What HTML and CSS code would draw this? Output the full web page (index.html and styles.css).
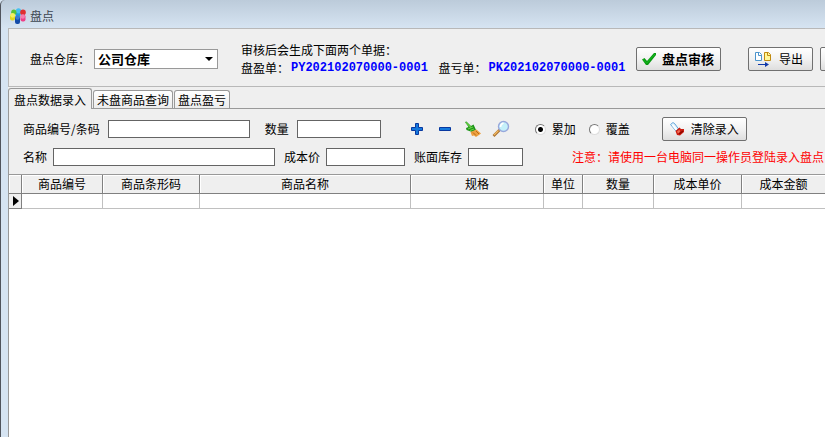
FILE: index.html
```html
<!DOCTYPE html>
<html lang="zh-CN">
<head>
<meta charset="utf-8">
<title>盘点</title>
<link rel="stylesheet" href="styles.css">
</head>
<body>
<div class="window">
  <header class="titlebar">
    <svg class="app-icon" width="16" height="16" viewBox="0 0 16 16">
      <rect x="5.500" y="3" width="5" height="6" rx="2" fill="#1c9fdc"/>
      <circle cx="8.500" cy="2.800" r="2.600" fill="#45c0f0"/>
      <circle cx="3.800" cy="4.200" r="2.600" fill="#58c238"/>
      <circle cx="13" cy="4.400" r="2.800" fill="#e03030"/>
      <rect x="10.500" y="6.500" width="5" height="7" rx="2" fill="#ee3f87"/>
      <rect x="0" y="6" width="5" height="6.500" rx="2" fill="#e0d820"/>
      <circle cx="2.700" cy="7.300" r="2.400" fill="#f4f060"/>
      <rect x="5" y="8" width="5" height="8" rx="2" fill="#124ba8"/>
      <circle cx="7.500" cy="9.500" r="2.200" fill="#3c7cd0"/>
      <circle cx="12.800" cy="8.500" r="2.200" fill="#f480b0"/>
    </svg>
    <h1 class="title">盘点</h1>
  </header>

  <main class="client">
    <section class="summary">
      <label class="warehouse-label" for="warehouse">盘点仓库：</label>
      <span class="combo">
        <select id="warehouse" class="combo-select"><option>公司仓库</option></select>
      </span>
      <div class="docs">
        <div>审核后会生成下面两个单据：</div>
        <div class="doc-line">
          <span class="doc">盘盈单：<b class="doc-no">PY202102070000-0001</b></span>
          <span class="doc">盘亏单：<b class="doc-no">PK202102070000-0001</b></span>
        </div>
      </div>
      <div class="actions">
        <button type="button" class="btn btn-audit">
          <svg width="14" height="14" viewBox="0 0 14 14"><path d="M0 7.500 2.500 6 5 9 12 1h2v2L6 13H4Z" fill="#0a9a12"/><path d="M1 7.500 4.800 11 13 2" fill="none" stroke="#16bd20" stroke-width="1"/></svg>
          盘点审核
        </button>
        <button type="button" class="btn btn-export">
          <svg width="18" height="16" viewBox="0 0 18 16"><path d="M1.500 1.500h4l2 2v6h-6Z" fill="#fff" stroke="#4c94cc"/><path d="M4.500 1.500v3h3" fill="none" stroke="#4c94cc"/><path d="M10.500 1.500h4l2 2v6h-6Z" fill="#fff79a" stroke="#c08a10"/><path d="M13.500 1.500v3h3" fill="none" stroke="#c08a10"/><path d="M4 13h7v-2l4 2.500-4 2.500V14H4Z" fill="#1038a8"/></svg>
          导出
        </button>
        <button type="button" class="btn btn-more" aria-label="更多"></button>
      </div>
    </section>

    <nav class="tabs" role="tablist">
      <button type="button" role="tab" aria-selected="true" class="tab tab-active">盘点数据录入</button>
      <button type="button" role="tab" aria-selected="false" class="tab">未盘商品查询</button>
      <button type="button" role="tab" aria-selected="false" class="tab">盘点盈亏</button>
    </nav>

    <section class="page">
      <form class="entry">
        <div class="row row-main">
          <label for="code">商品编号/条码</label>
          <input id="code" class="field field-code" type="text">
          <label for="qty">数量</label>
          <input id="qty" class="field field-qty" type="text">
          <div class="tools">
            <button type="button" class="tool" aria-label="增加">
              <svg width="18" height="18" viewBox="0 0 18 18"><path d="M7.500 3.500h3v4h4v3h-4v4h-3v-4h-4v-3h4Z" fill="#1478dc" stroke="#0838a0"/></svg>
            </button>
            <button type="button" class="tool" aria-label="减少">
              <svg width="18" height="18" viewBox="0 0 18 18"><path d="M3.500 7.500h11v3h-11Z" fill="#1478dc" stroke="#0838a0"/></svg>
            </button>
            <button type="button" class="tool" aria-label="清扫">
              <svg width="18" height="18" viewBox="0 0 18 18"><path d="M1 2 2.500 1.500 7 6 9.500 4.500 12 10 8 12 2.500 10 2 8 4.500 7Z" fill="#1c9418"/><path d="M2 2.500 7.500 8M4 9l5-2M6 10.500l4-1.500" stroke="#66cf45" stroke-width="1.200" fill="none"/><path d="M6.500 12 12.500 9.500 17 13.500 15 15 12 17 10 15.500 8 16Z" fill="#eda040"/><path d="m9 12.500 3 3m-0-4.500 3 3" stroke="#b96a16" stroke-width="1" fill="none"/></svg>
            </button>
            <button type="button" class="tool" aria-label="查找">
              <svg width="18" height="18" viewBox="0 0 18 18"><path d="m1.500 16 6-6" stroke="#a87030" stroke-width="2.600"/><path d="m2 15 4.500-4.500" stroke="#f0b860" stroke-width="1.200"/><circle cx="11.500" cy="6.500" r="5" fill="#c4f0fa" stroke="#98a8dc" stroke-width="1.400"/><path d="M8.500 7q0-3 3-4" stroke="#fff" stroke-width="1.600" fill="none"/></svg>
            </button>
          </div>
          <label class="choice"><input class="radio" type="radio" name="mode" checked>累加</label>
          <label class="choice"><input class="radio" type="radio" name="mode">覆盖</label>
          <button type="button" class="btn btn-clear">
            <svg width="16" height="16" viewBox="0 0 16 16"><path d="M1.500 3.500 4 1.500 6 3 9.500 8 7 10Z" fill="#e4f4fc" stroke="#68a8dc"/><path d="m3.500 4 4 5" stroke="#fff" stroke-width="1.500"/><path d="m6.500 10 4-3.500L12 8h3v3l-4 3.500-3-.5Z" fill="#cc1c10"/><path d="m8 10.500 2.500-2 .5 2.500-2 1.500Z" fill="#f07058"/><path d="m10 13 4-3" stroke="#8c0800" stroke-width="1.500"/></svg>
            清除录入
          </button>
        </div>
        <div class="row row-detail">
          <label for="name">名称</label>
          <input id="name" class="field field-name" type="text">
          <label for="cost">成本价</label>
          <input id="cost" class="field field-cost" type="text">
          <label for="stock">账面库存</label>
          <input id="stock" class="field field-stock" type="text">
          <span class="notice">注意：请使用一台电脑同一操作员登陆录入盘点</span>
        </div>
      </form>

      <div class="grid-area">
        <table class="grid">
          <colgroup>
            <col class="c-mark"><col class="c-code"><col class="c-barcode"><col><col class="c-spec"><col class="c-unit"><col class="c-qty"><col class="c-price"><col class="c-amount">
          </colgroup>
          <thead>
            <tr><th></th><th>商品编号</th><th>商品条形码</th><th>商品名称</th><th>规格</th><th>单位</th><th>数量</th><th>成本单价</th><th>成本金额</th></tr>
          </thead>
          <tbody>
            <tr><td class="marker"><svg width="6" height="10" viewBox="0 0 6 10"><path d="M0 0 6 5 0 10Z"/></svg></td><td></td><td></td><td></td><td></td><td></td><td></td><td></td><td></td></tr>
          </tbody>
        </table>
      </div>
    </section>
  </main>
</div>
</body>
</html>
```
FILE: styles.css
```css
* { box-sizing: border-box; }

body {
  margin: 0;
  overflow: hidden;
  background: #d6e4f2;
  color: #000;
  font: 12px/18px "Noto Sans CJK SC", "Liberation Sans", sans-serif;
  white-space: nowrap;
}

button, input, select { margin: 0; font: inherit; color: inherit; }

.window {
  display: flex;
  flex-direction: column;
  min-height: 100vh;
  padding-left: 7px;
  border-left: 1px solid #50545c;
  border-top-left-radius: 5px;
  background: linear-gradient(#bccbda, #d6e4f2 28px);
}

.titlebar {
  display: flex;
  align-items: center;
  gap: 4px;
  height: 28px;
  padding: 4px 2px 0;
}
.title { margin: 0; font-size: 12px; font-weight: 400; color: #3c4650; }

.client {
  display: flex;
  flex: 1;
  flex-direction: column;
  background: #efefef;
}

.summary {
  display: flex;
  align-items: center;
  height: 59px;
  padding: 2px 0 0 21px;
  border: solid #b8b8b8;
  border-width: 1px 0 1px 1px;
  overflow: hidden;
}
.summary > * { flex: none; }
.warehouse-label { width: 64px; }

.combo { position: relative; width: 124px; margin-right: 23px; }
.combo-select {
  display: block;
  width: 100%;
  height: 20px;
  padding: 0 3px;
  border: 1px solid #999;
  border-radius: 0;
  background: #fff;
  appearance: none;
  font-size: 13px;
  font-weight: 700;
  line-height: 18px;
}
.combo::after {
  content: "";
  position: absolute;
  top: 8px;
  right: 5px;
  border: 4px solid transparent;
  border-top-color: #000;
  border-bottom: 0;
  pointer-events: none;
}

.docs { width: 395px; }
.doc-line { display: flex; }
.doc { display: flex; width: 198px; }
.doc-no {
  margin-left: 2px;
  color: #00f;
  font: 700 12px/18px "Liberation Mono", monospace;
}

.actions { display: flex; }
.btn {
  display: flex;
  align-items: center;
  height: 24px;
  padding: 0 6px;
  border: 1px solid #707070;
  border-radius: 2px;
  background: linear-gradient(#fff, #f2f2f2 50%, #dedede);
}
.btn-audit { gap: 6px; width: 85px; margin-right: 27px; padding: 0 5px; font-size: 13px; font-weight: 700; }
.btn-export { gap: 7px; width: 65px; margin-right: 7px; padding: 0 5px; }
.btn-more { width: 65px; }
.btn-clear { gap: 6px; width: 85px; margin-left: 32px; }

.tabs {
  display: flex;
  align-items: flex-end;
  height: 22px;
  gap: 1px;
  border-bottom: 1px solid #999;
}
.tab {
  height: 18px;
  padding: 0 3px;
  border: 1px solid #999;
  border-bottom: 0;
  border-radius: 3px 3px 0 0;
  background: linear-gradient(#fff, #ececec);
  line-height: 17px;
}
.tab-active {
  height: 21px;
  margin-bottom: -1px;
  padding: 0 5px;
  background: #efefef;
}

.page { display: flex; flex: 1; flex-direction: column; border-left: 1px solid #999; }

.entry { padding: 8px 0 8px 14px; }
.row { display: flex; align-items: center; }
.row > * { flex: none; }
.row-main { height: 24px; margin-bottom: 7px; }
.row-detail { height: 18px; }

.field {
  height: 18px;
  padding: 0 3px;
  border: 1px solid #646464;
  border-radius: 0;
  background: #fff;
}
.row-main .field { margin: 0 15px 0 8px; }
.row-detail .field { margin: 0 9px 0 6px; }
.field-code { width: 142px; }
.field-qty { width: 84px; }
.field-name { width: 222px; }
.field-cost { width: 79px; }
.field-stock { width: 55px; }

.tools { display: flex; gap: 10px; margin: 0 25px 0 12px; }
.tool { display: flex; padding: 0; border: 0; background: none; }

.choice { display: flex; align-items: center; gap: 6px; }
.choice + .choice { margin-left: 13px; }
.radio {
  width: 11px;
  height: 11px;
  border: 1px solid #777;
  border-right-color: #ddd;
  border-bottom-color: #ddd;
  border-radius: 50%;
  background: #fff;
  appearance: none;
}
.radio:checked { background: radial-gradient(circle, #000 2px, #fff 3px); }

.notice { margin-left: 40px; color: #f00; }

.grid-area { flex: 1; border-top: 1px solid #999; background: #fff; }
.grid { width: 100%; border-collapse: separate; border-spacing: 0; table-layout: fixed; }
.c-mark { width: 13px; }
.c-code { width: 81px; }
.c-barcode { width: 97px; }
.c-spec { width: 133px; }
.c-unit { width: 39px; }
.c-qty { width: 71px; }
.c-price { width: 88px; }
.c-amount { width: 83px; }
.grid th {
  height: 19px;
  padding: 0;
  border-right: 1px solid #808080;
  border-bottom: 1px solid #808080;
  background: #efefef;
  box-shadow: inset 1px 1px #fff;
  font-weight: 400;
}
.grid td {
  height: 15px;
  padding: 0;
  border-right: 1px solid #c0c0c0;
  border-bottom: 1px solid #c0c0c0;
  line-height: 12px;
}
.grid th:last-child, .grid td:last-child { border-right: 0; }
.grid .marker { padding-left: 4px; border-color: #808080; background: #efefef; }
.marker svg { display: block; }
```
